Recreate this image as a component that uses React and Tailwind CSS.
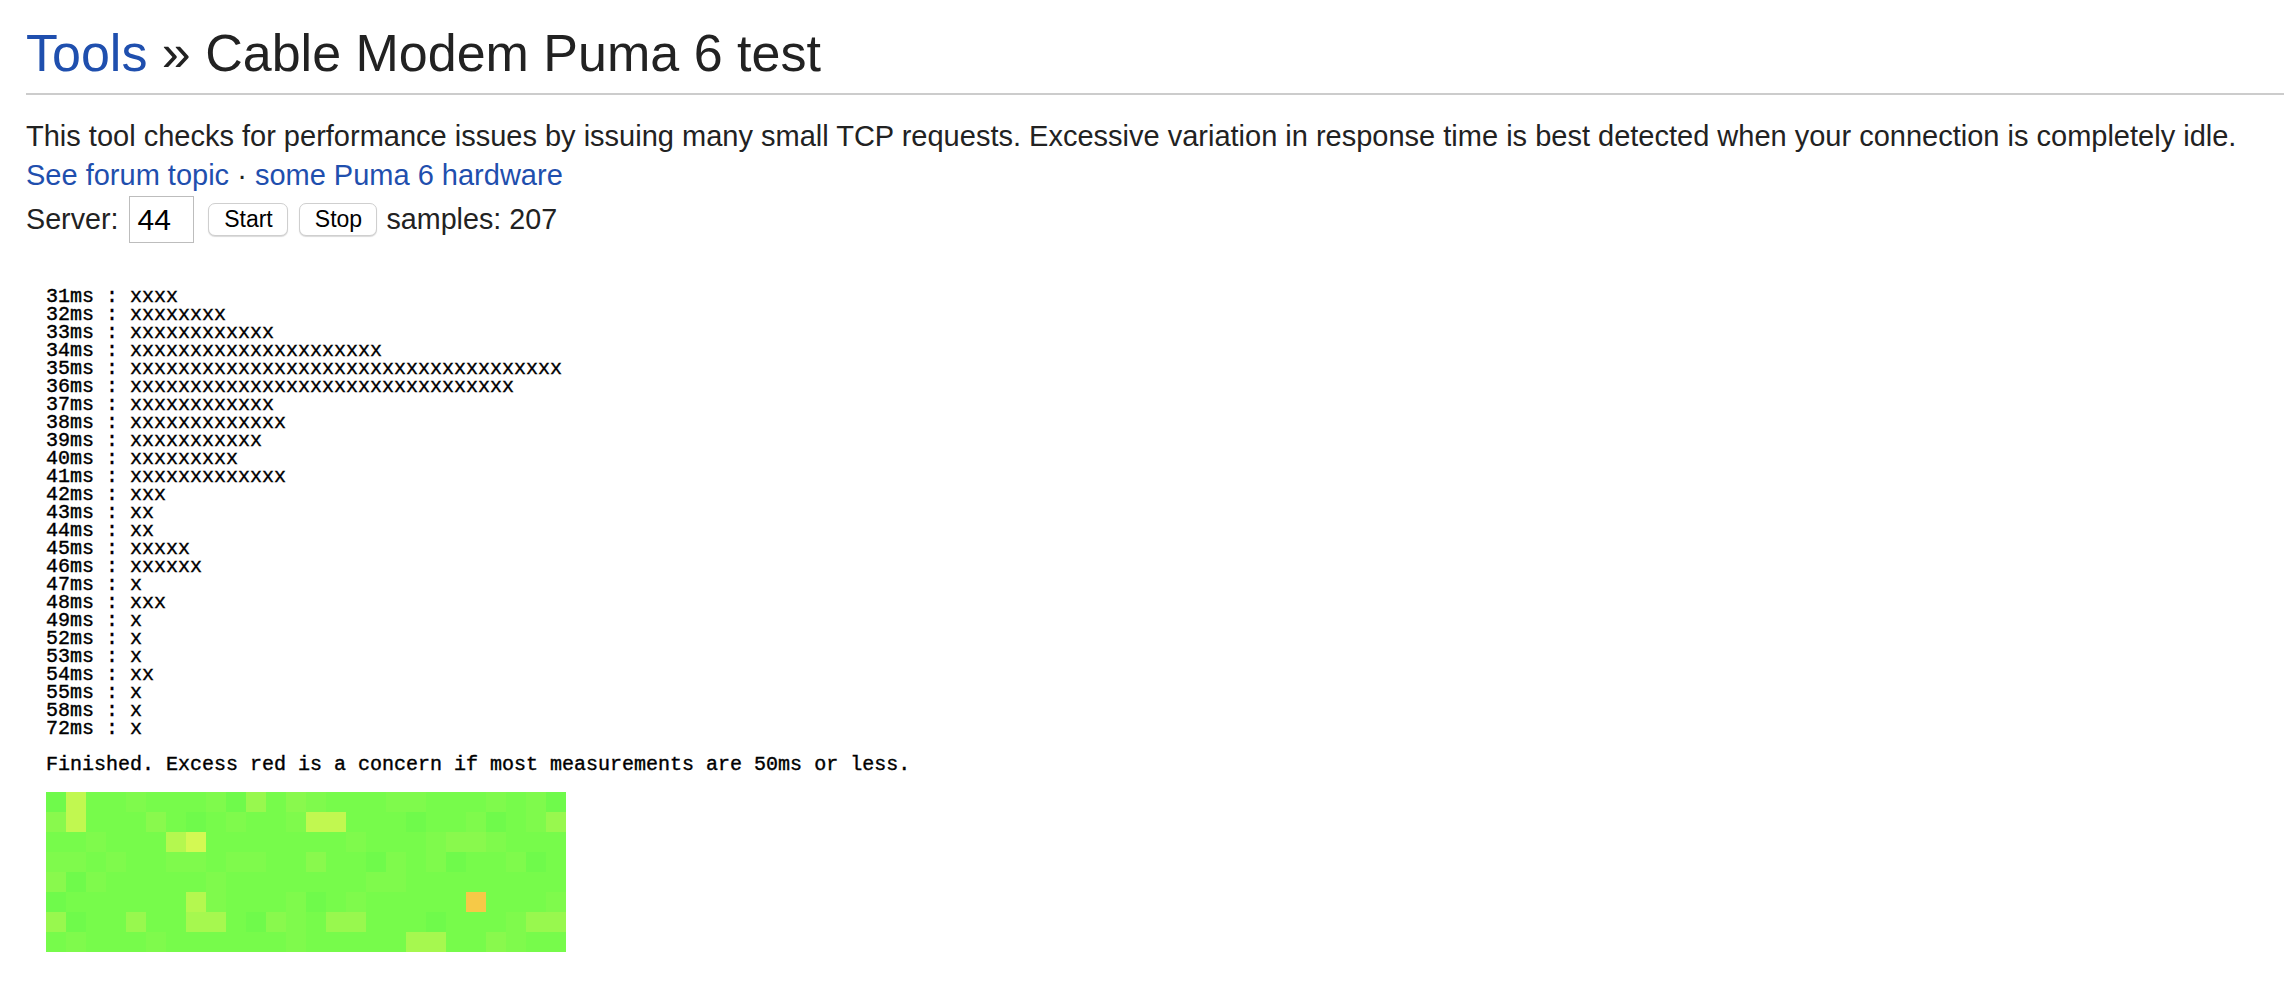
import React from "react";

const HIST = [
  [31, 4], [32, 8], [33, 12], [34, 21], [35, 36], [36, 32], [37, 12], [38, 13],
  [39, 11], [40, 9], [41, 13], [42, 3], [43, 2], [44, 2], [45, 5], [46, 6],
  [47, 1], [48, 3], [49, 1], [52, 1], [53, 1], [54, 2], [55, 1], [58, 1], [72, 1],
];

const PAL = {
  a: "#6ffa4b",
  b: "#77fb4b",
  c: "#7ffa4c",
  d: "#89f94d",
  e: "#98f84e",
  f: "#a6f84f",
  g: "#b4f84f",
  h: "#c1f850",
  i: "#d3f953",
  o: "#f6c947",
};

const ROWS = [
  "ahbbcbbbcaebdcbbbccbbbcbca",
  "dhbbbdbabcbbchhbbbabbcabce",
  "bbcbbbgibbbbbbbcbbbcddcbbb",
  "ccbcbbccbccbbdbbacbcabbcab",
  "dacbbbbbcbbbbbbbccbbbbbbbb",
  "abbbbbbgcbbbcabcbbbbbobbbc",
  "eabbebbffbadcbeebbbabbbcee",
  "bcbbbcbbbbbbcbbbbbffbbdcbb",
];

export default function App() {
  const histText =
    HIST.map(([ms, n]) => `${ms}ms : ${"x".repeat(n)}`).join("\n") +
    "\n\nFinished. Excess red is a concern if most measurements are 50ms or less.";

  return (
    <div className="min-h-screen bg-white text-[#222222] font-['Liberation_Sans',Arial,sans-serif]">
      <div className="pl-[26px]">
        <h1 className="pt-[23px] text-[52px] leading-[60px] font-normal text-[#222222]">
          <a href="#" className="text-[#1f4fae]">Tools</a> » Cable Modem Puma 6 test
        </h1>
        <div className="mt-[10px] h-[2px] bg-[#cccccc]" />
        <p className="mt-[22px] pr-[26px] text-[29px] leading-[39px]">
          This tool checks for performance issues by issuing many small TCP requests. Excessive variation in response time is best detected when your connection is completely idle.
          <br />
          <a href="#" className="text-[#1f4fae]">See forum topic</a>
          <span> · </span>
          <a href="#" className="text-[#1f4fae]">some Puma 6 hardware</a>
        </p>
        <div className="mt-px flex items-center text-[28.7px] leading-[39px]">
          <span>Server:</span>
          <div className="ml-[11px] flex h-[47px] w-[65px] items-center border border-[#bdbdbd] pl-[7px] text-[30px] text-black">
            44
          </div>
          <button className="ml-[14px] h-[33px] w-[80px] rounded-[7px] border border-[#cfcfcf] bg-white text-[23px] leading-none text-black shadow-[0_1px_1px_rgba(0,0,0,0.15)]">
            Start
          </button>
          <button className="ml-[11px] h-[33px] w-[78px] rounded-[7px] border border-[#cfcfcf] bg-white text-[23px] leading-none text-black shadow-[0_1px_1px_rgba(0,0,0,0.15)]">
            Stop
          </button>
          <span className="ml-[9px]">samples: 207</span>
        </div>
        <div className="ml-[20px] mt-[45px]">
          <pre className="font-['Liberation_Mono','Courier_New',monospace] text-[20px] leading-[18px] text-black [-webkit-text-stroke:0.4px_black]">
            {histText}
          </pre>
          <div className="mt-[18px] grid w-[520px] grid-cols-[repeat(26,20px)] grid-rows-[repeat(8,20px)]">
            {ROWS.flatMap((row, r) =>
              row.split("").map((ch, c) => (
                <div key={`${r}-${c}`} style={{ backgroundColor: PAL[ch] }} />
              ))
            )}
          </div>
        </div>
      </div>
    </div>
  );
}
